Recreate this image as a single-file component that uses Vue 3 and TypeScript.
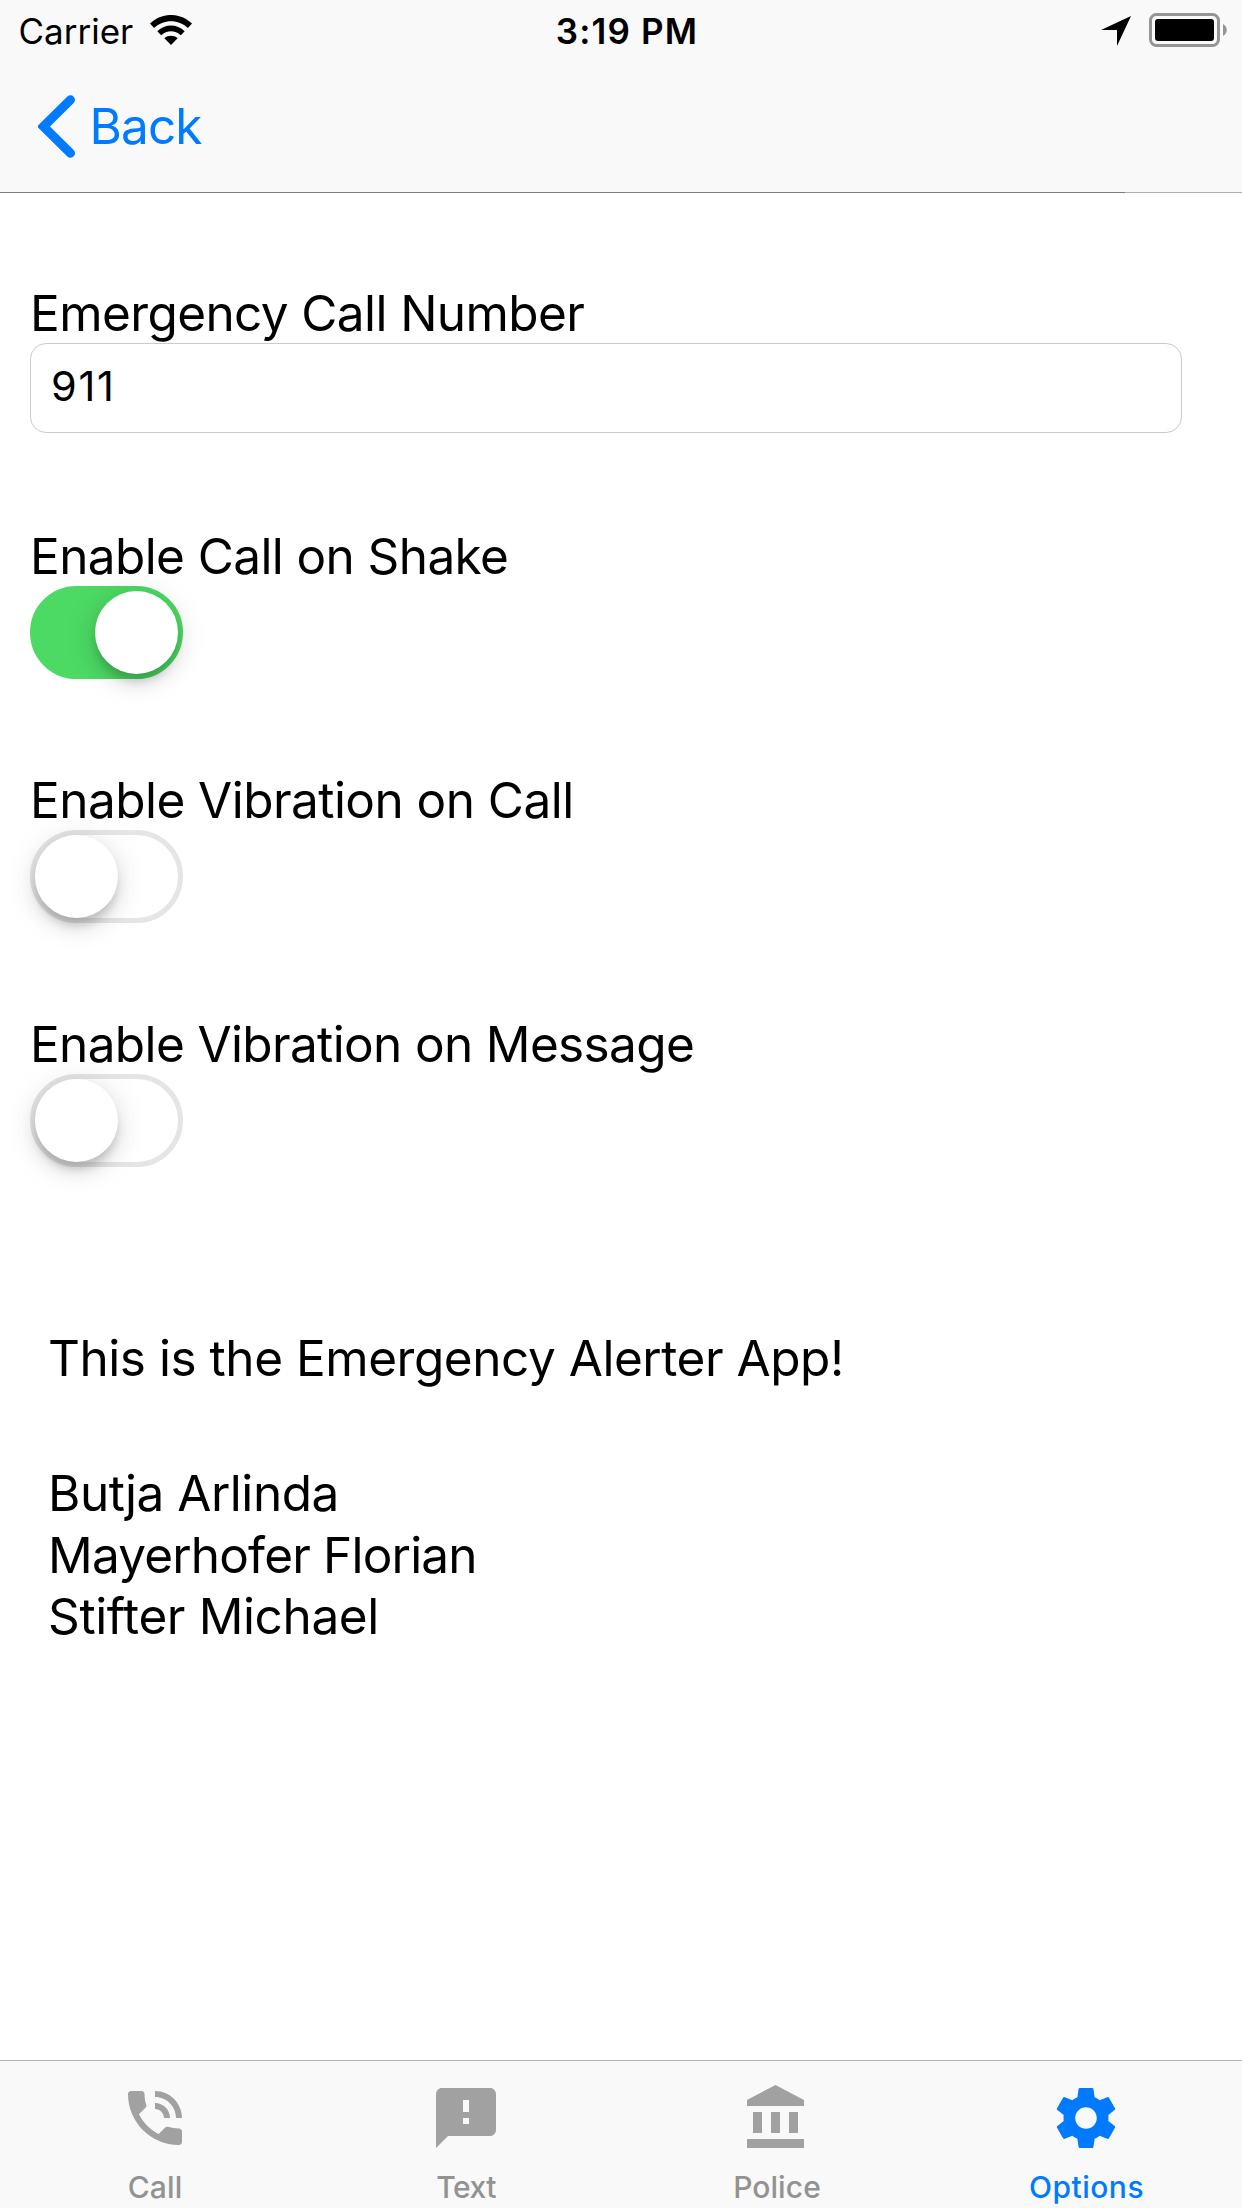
<script setup lang="ts">
import { ref } from 'vue'

interface Toggle {
  label: string
  on: boolean
  spacing: string
}

interface Tab {
  label: string
  icon: string
  spacing: string
}

const phoneNumber = ref('911')

const toggles = ref<Toggle[]>([
  { label: 'Enable Call on Shake', on: true, spacing: '-0.6px' },
  { label: 'Enable Vibration on Call', on: false, spacing: '-0.54px' },
  { label: 'Enable Vibration on Message', on: false, spacing: '-0.64px' },
])

const authors = [
  { name: 'Butja Arlinda', spacing: '-0.47px' },
  { name: 'Mayerhofer Florian', spacing: '-0.82px' },
  { name: 'Stifter Michael', spacing: '-0.38px' },
]

const tabs: Tab[] = [
  {
    label: 'Call',
    icon: 'M20 15.5c-1.25 0-2.45-.2-3.57-.57-.35-.11-.74-.03-1.02.24l-2.2 2.2c-2.83-1.44-5.15-3.75-6.59-6.59l2.2-2.21c.28-.26.36-.65.25-1C8.7 6.45 8.5 5.25 8.5 4c0-.55-.45-1-1-1H4c-.55 0-1 .45-1 1 0 9.39 7.61 17 17 17 .55 0 1-.45 1-1v-3.5c0-.55-.45-1-1-1zM19 12h2c0-4.97-4.03-9-9-9v2c3.87 0 7 3.13 7 7zm-4 0h2c0-2.76-2.24-5-5-5v2c1.66 0 3 1.34 3 3z',
    spacing: '0.13px',
  },
  {
    label: 'Text',
    icon: 'M20 2H4c-1.1 0-1.99.9-1.99 2L2 22l4-4h14c1.1 0 2-.9 2-2V4c0-1.1-.9-2-2-2zm-7 12h-2v-2h2v2zm0-4h-2V6h2v4z',
    spacing: '-0.48px',
  },
  {
    label: 'Police',
    icon: 'M4 10v7h3v-7H4zm6 0v7h3v-7h-3zM2 22h19v-3H2v3zm14-12v7h3v-7h-3zm-4.5-9L2 6v2h19V6l-9.5-5z',
    spacing: '0.08px',
  },
  {
    label: 'Options',
    icon: 'M19.43 12.98c.04-.32.07-.64.07-.98s-.03-.66-.07-.98l2.11-1.65c.19-.15.24-.42.12-.64l-2-3.46c-.12-.22-.39-.3-.61-.22l-2.49 1c-.52-.4-1.08-.73-1.69-.98l-.38-2.65C14.46 2.18 14.25 2 14 2h-4c-.25 0-.46.18-.49.42l-.38 2.65c-.61.25-1.17.59-1.69.98l-2.49-1c-.23-.09-.49 0-.61.22l-2 3.46c-.13.22-.07.49.12.64l2.11 1.65c-.04.32-.07.65-.07.98s.03.66.07.98l-2.11 1.65c-.19.15-.24.42-.12.64l2 3.46c.12.22.39.3.61.22l2.49-1c.52.4 1.08.73 1.69.98l.38 2.65c.03.24.24.42.49.42h4c.25 0 .46-.18.49-.42l.38-2.65c.61-.25 1.17-.59 1.69-.98l2.49 1c.23.09.49 0 .61-.22l2-3.46c.12-.22.07-.49-.12-.64l-2.11-1.65zM12 15.6c-1.98 0-3.6-1.62-3.6-3.6s1.62-3.6 3.6-3.6 3.6 1.62 3.6 3.6-1.62 3.6-3.6 3.6z',
    spacing: '0.5px',
  },
]

const activeTab = ref('Options')
</script>

<template>
  <div class="screen">
    <header class="top">
      <div class="status">
        <div class="status-left">
          <span class="carrier">Carrier</span>
          <svg class="wifi" width="42" height="30" viewBox="0 0 42 30">
            <path d="M0 8.6C12-2.9 30-2.9 42 8.6L37.9 12.9C28.5 3.9 13.5 3.9 4.1 12.9Z" />
            <path d="M7.3 16.2C15 8.6 27 8.6 34.7 16.2L30.8 20.2C25.3 14.9 16.7 14.9 11.2 20.2Z" />
            <path d="M14.4 23.2C18.2 20 23.8 20 27.6 23.2L21 29.9Z" />
          </svg>
        </div>
        <span class="time">3:19 PM</span>
        <div class="status-right">
          <svg class="location" width="30" height="30" viewBox="0 0 30 30">
            <path d="M0 14 30 0 16 30V14Z" />
          </svg>
          <svg class="battery" width="79" height="34" viewBox="0 0 79 34">
            <rect x="1.5" y="1.5" width="68" height="31" rx="6" fill="none" stroke="#959595" stroke-width="3" />
            <rect x="6" y="6" width="59" height="22" rx="3" />
            <path d="M74 11C79 13.5 79 20.5 74 23Z" fill="#959595" />
          </svg>
        </div>
      </div>
      <nav class="navbar">
        <a class="back">
          <svg width="37" height="63" viewBox="0 0 37 63">
            <path d="M32.5 4.8 5.5 31.5 32.5 58.2" fill="none" stroke="#007aff" stroke-width="9" stroke-linecap="round" />
          </svg>
          <span>Back</span>
        </a>
      </nav>
      <div class="hairline"><i></i></div>
    </header>

    <main class="content">
      <section class="field">
        <label class="label number-label" for="number">Emergency Call Number</label>
        <input id="number" v-model="phoneNumber" class="input" type="tel" />
      </section>

      <section v-for="item in toggles" :key="item.label" class="field">
        <span class="label" :style="{ letterSpacing: item.spacing }">{{ item.label }}</span>
        <button
          class="switch"
          :class="{ on: item.on }"
          role="switch"
          :aria-checked="item.on"
          :aria-label="item.label"
          @click="item.on = !item.on"
        >
          <span class="knob"></span>
        </button>
      </section>

      <section class="about">
        <p class="intro">This is the Emergency Alerter App!</p>
        <p v-for="a in authors" :key="a.name" :style="{ letterSpacing: a.spacing }">{{ a.name }}</p>
      </section>
    </main>

    <footer class="tabs">
      <a
        v-for="tab in tabs"
        :key="tab.label"
        class="tab"
        :class="{ active: tab.label === activeTab }"
        @click="activeTab = tab.label"
      >
        <svg width="72" height="72" viewBox="0 0 24 24"><path :d="tab.icon" /></svg>
        <span :style="{ letterSpacing: tab.spacing }">{{ tab.label }}</span>
      </a>
    </footer>
  </div>
</template>

<style>
body {
  margin: 0;
  background: #fff;
}
</style>

<style scoped>
.screen {
  display: flex;
  flex-direction: column;
  width: 1242px;
  height: 2208px;
  overflow: hidden;
  background: #fff;
  color: #000;
  font-family: Inter, "Liberation Sans", sans-serif;
}

.top {
  flex: none;
  height: 193px;
  background: #f9f9f9;
}

.status {
  display: grid;
  grid-template-columns: 1fr auto 1fr;
  height: 60px;
  font-size: 35px;
  line-height: 40px;
}

.status-left {
  display: flex;
  align-items: flex-start;
  padding-left: 18.5px;
}

.carrier {
  width: 131.5px;
  margin-top: 11px;
}

.wifi {
  margin-top: 15px;
}

.time {
  margin: 11px 0 0 12px;
  font-weight: 600;
  letter-spacing: 1.16px;
}

.status-right {
  display: flex;
  justify-content: flex-end;
  padding-right: 14px;
}

.location {
  margin: 16px 18px 0 0;
}

.battery {
  margin-top: 13px;
}

.navbar {
  height: 132px;
}

.back {
  display: flex;
  align-items: flex-start;
  padding: 35px 0 0 38px;
  color: #007aff;
}

.back span {
  margin: 1px 0 0 14.5px;
  font-size: 49.5px;
  line-height: 60px;
  letter-spacing: -0.9px;
}

.hairline {
  height: 1px;
  background: #b2b2b2;
}

.hairline i {
  display: block;
  width: 1125px;
  height: 1px;
  background: #7c7c7c;
}

.content {
  flex: 1;
  padding: 90px 60px 0 30px;
}

.field {
  display: flex;
  flex-direction: column;
  align-items: flex-start;
  height: 243px;
}

.field + .field {
  height: 244px;
}

.label {
  flex: none;
  height: 60px;
  font-size: 49.5px;
  line-height: 60px;
}

.number-label {
  letter-spacing: -0.6px;
}

.input {
  box-sizing: border-box;
  width: 100%;
  height: 90px;
  padding: 0 20px 4px;
  border: 1px solid #cbcbcb;
  border-radius: 16px;
  outline: none;
  background: #fff;
  color: #000;
  font-family: inherit;
  font-size: 41.5px;
  letter-spacing: 1.7px;
}

.switch {
  box-sizing: border-box;
  display: flex;
  width: 153px;
  height: 93px;
  padding: 0;
  border: 5px solid #e5e5e5;
  border-radius: 47px;
  background: #fff;
}

.switch.on {
  justify-content: flex-end;
  border-color: #4cd964;
  background: #4cd964;
}

.knob {
  width: 83px;
  height: 83px;
  border-radius: 50%;
  background: #fff;
  box-shadow: 0 4px 34px rgba(0, 0, 0, 0.1), 0 9px 20px rgba(0, 0, 0, 0.1), 0 9px 8px -2px rgba(0, 0, 0, 0.14);
}

.about {
  padding: 70px 0 0 18px;
  font-size: 49.5px;
  line-height: 61.5px;
}

.about p {
  margin: 0;
}

.about .intro {
  margin-bottom: 73.5px;
  letter-spacing: -0.46px;
}

.tabs {
  flex: none;
  display: grid;
  grid-template-columns: 310px 312px 308px 312px;
  box-sizing: border-box;
  height: 148px;
  border-top: 1px solid #b2b2b2;
  background: #f9f9f9;
}

.tab {
  display: flex;
  flex-direction: column;
  align-items: center;
  padding-top: 21px;
  color: #929292;
  fill: #a1a1a1;
  font-size: 30px;
  font-weight: 500;
  line-height: 36px;
}

.tab svg {
  flex: none;
  margin-bottom: 15px;
}

.tab:nth-child(3) {
  padding-left: 2px;
}

.tab.active {
  color: #007aff;
  fill: #007aff;
}

.tab.active span {
  padding-left: 1px;
}
</style>
